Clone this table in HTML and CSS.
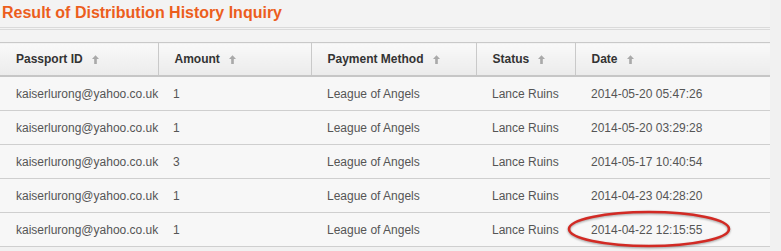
FILE: index.html
```html
<!DOCTYPE html>
<html>
<head>
<meta charset="utf-8">
<link rel="stylesheet" href="styles.css">
</head>
<body>
<div class="page">
  <h1 class="title">Result of Distribution History Inquiry</h1>
  <div class="rule"></div>
  <div class="table-wrap">
    <table class="grid">
      <colgroup>
        <col class="c1"><col class="c2"><col class="c3"><col class="c4"><col class="c5">
      </colgroup>
      <thead>
        <tr>
          <th>Passport ID<svg class="sort" viewBox="0 0 8 10"><path d="M4 0 L8 4.5 H5.5 V10 H2.5 V4.5 H0 Z"/></svg></th>
          <th>Amount<svg class="sort" viewBox="0 0 8 10"><path d="M4 0 L8 4.5 H5.5 V10 H2.5 V4.5 H0 Z"/></svg></th>
          <th>Payment Method<svg class="sort" viewBox="0 0 8 10"><path d="M4 0 L8 4.5 H5.5 V10 H2.5 V4.5 H0 Z"/></svg></th>
          <th>Status<svg class="sort" viewBox="0 0 8 10"><path d="M4 0 L8 4.5 H5.5 V10 H2.5 V4.5 H0 Z"/></svg></th>
          <th>Date<svg class="sort" viewBox="0 0 8 10"><path d="M4 0 L8 4.5 H5.5 V10 H2.5 V4.5 H0 Z"/></svg></th>
        </tr>
      </thead>
      <tbody>
        <tr><td>kaiserlurong@yahoo.co.uk</td><td>1</td><td>League of Angels</td><td>Lance Ruins</td><td>2014-05-20 05:47:26</td></tr>
        <tr><td>kaiserlurong@yahoo.co.uk</td><td>1</td><td>League of Angels</td><td>Lance Ruins</td><td>2014-05-20 03:29:28</td></tr>
        <tr><td>kaiserlurong@yahoo.co.uk</td><td>3</td><td>League of Angels</td><td>Lance Ruins</td><td>2014-05-17 10:40:54</td></tr>
        <tr><td>kaiserlurong@yahoo.co.uk</td><td>1</td><td>League of Angels</td><td>Lance Ruins</td><td>2014-04-23 04:28:20</td></tr>
        <tr><td>kaiserlurong@yahoo.co.uk</td><td>1</td><td>League of Angels</td><td>Lance Ruins</td><td>2014-04-22 12:15:55</td></tr>
      </tbody>
    </table>
    <svg class="circle" viewBox="0 0 170 42"><ellipse cx="85" cy="21" rx="80" ry="17" /></svg>
  </div>
</div>
</body>
</html>
```

FILE: styles.css
```css
html, body {
  margin: 0;
  padding: 0;
  background: #f1f1f1;
}
body {
  font-family: "Liberation Sans", Arial, Helvetica, sans-serif;
  width: 781px;
  height: 251px;
  overflow: hidden;
}
.page {
  width: 770px;
  background: #f3f3f3;
}
.title {
  margin: 0;
  padding: 2px 0 0 2px;
  height: 25px;
  font-size: 16px;
  line-height: 22px;
  font-weight: bold;
  color: #ec5e1d;
}
.rule {
  height: 1px;
  border-top: 1px solid #dadada;
  border-bottom: 1px solid #dadada;
  margin-bottom: 12px;
}
.table-wrap {
  position: relative;
}
.grid {
  width: 770px;
  border-collapse: collapse;
  table-layout: fixed;
  background: #f7f7f7;
}
.c1 { width: 158px; }
.c2 { width: 153px; }
.c3 { width: 165px; }
.c4 { width: 99px; }
.c5 { width: 195px; }
.grid th {
  height: 32px;
  padding: 0 0 0 16px;
  text-align: left;
  font-size: 12px;
  font-weight: bold;
  color: #333;
  background: linear-gradient(#f9f9f9, #ebebeb);
  border-top: 1px solid #c9c9c9;
  border-bottom: 2px solid #c6c6c6;
  border-left: 1px solid #c9c9c9;
}
.grid th:first-child { border-left: none; }
.sort {
  width: 7px;
  height: 9px;
  margin-left: 9px;
  fill: #a9a9a9;
  vertical-align: -1px;
}
.grid td {
  height: 33px;
  padding: 0 0 0 16px;
  font-size: 12px;
  color: #555;
  border-bottom: 1px solid #cfcfcf;
  white-space: nowrap;
}
.grid td:nth-child(2) { padding-left: 15px; }
.circle {
  position: absolute;
  left: 564px;
  top: 166px;
  width: 170px;
  height: 42px;
  overflow: visible;
}
.circle ellipse {
  fill: none;
  stroke: #d22a24;
  stroke-width: 2.6;
  filter: drop-shadow(0 1px 1px rgba(0,0,0,0.35));
}
```
